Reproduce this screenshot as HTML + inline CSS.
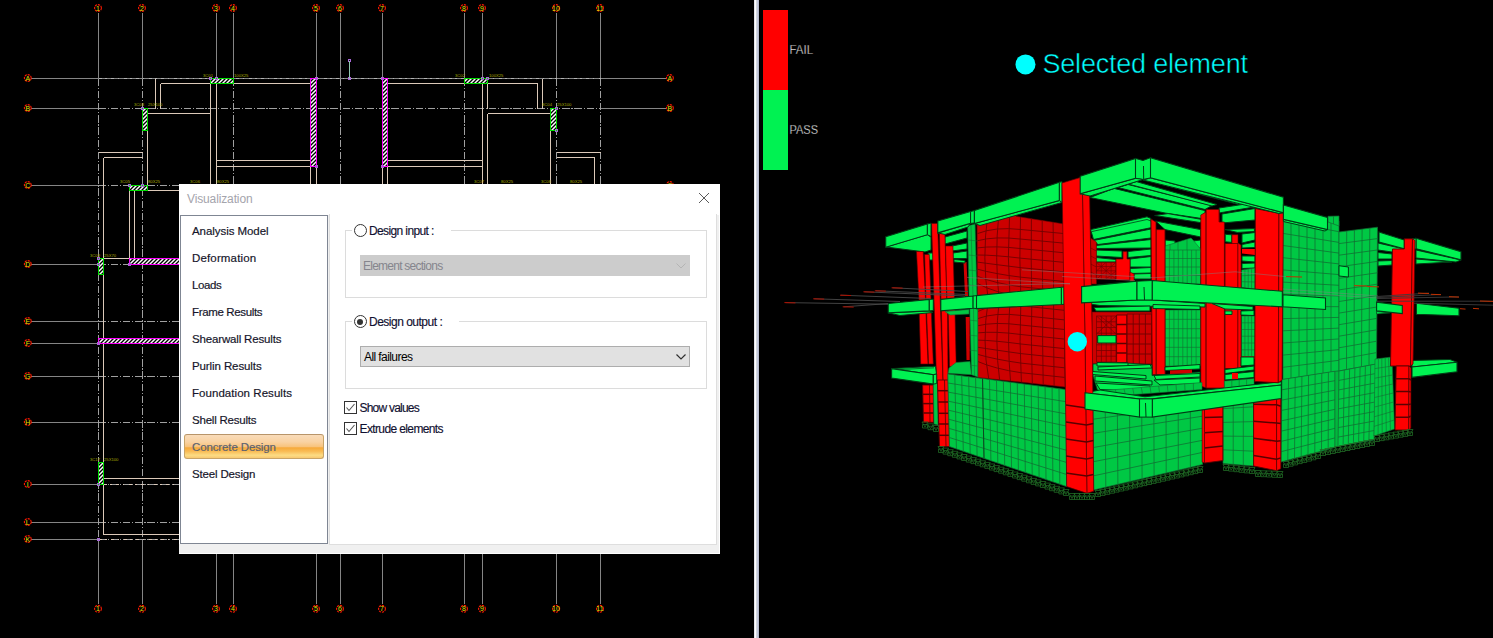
<!DOCTYPE html>
<html><head><meta charset="utf-8"><title>Visualization</title>
<style>
html,body{margin:0;padding:0;background:#000}
body{width:1493px;height:638px;position:relative;overflow:hidden;font-family:"Liberation Sans",sans-serif}
#div{position:absolute;left:754px;top:0;width:5px;height:638px;background:linear-gradient(90deg,#e4e4ec 0,#e4e4ec 1px,#ffffff 1px,#ffffff 2px,#d4d8e2 2px,#d4d8e2 3px,#c6cadc 3px,#c6cadc 4px,#b4b8cc 4px)}

#dlg{position:absolute;left:179px;top:184px;width:540.5px;height:370px;background:#f0f0f0;box-shadow:inset 0 -1px 0 #fff, inset -1px 0 0 #fff;}
#dlg:before{content:"";position:absolute;left:0;top:0;width:100%;height:31px;background:#fff}
#dlg .ttl{position:absolute;left:8px;top:8px;font-size:12px;color:#a4a4ac;letter-spacing:-0.13px;line-height:14px}
#dlg .cx{position:absolute;left:519px;top:8px}
#dlg .lb{position:absolute;left:1px;top:31px;width:148px;height:328.5px;box-sizing:border-box;border:1px solid #7f8693;background:#fff}
#dlg:after{content:"";position:absolute;left:0;top:31px;width:1px;height:328.5px;background:#fff}
#dlg .it{position:absolute;left:3px;width:140px;height:24.5px;box-sizing:border-box;font-size:11.5px;color:#15152a;line-height:24px;padding-left:8px;letter-spacing:-0.08px;-webkit-text-stroke:0.18px #15152a;white-space:nowrap}
#dlg .it span{position:relative;top:0.5px}
#dlg .it.sel{color:#5c6270;-webkit-text-stroke:0.2px #5c6270;border:1px solid #c8a468;border-top-color:#b8956a;border-radius:3px;padding-left:7px;line-height:22px;
 background:linear-gradient(#f9dcba 0%,#f9d2a2 30%,#f8c47e 50%,#f6a93a 56%,#f9bd58 72%,#fcdc84 88%,#f8c870 100%)}
#dlg .rp{position:absolute;left:150px;top:30px;width:388px;height:330.5px;box-sizing:border-box;border:1px solid #dedede;border-top:none;background:#fff}
#dlg .gb{position:absolute;left:14.5px;width:362.5px;box-sizing:border-box;border:1px solid #dcdcdc}
#dlg .gl{position:absolute;left:22px;height:14px;background:#fff;white-space:nowrap}
#dlg .rd{position:absolute;left:1.5px;top:1px;width:11px;height:11px;border:1px solid #333;border-radius:50%;background:#fff}
#dlg .rd.on:after{content:"";position:absolute;left:2.5px;top:2.5px;width:6px;height:6px;border-radius:50%;background:#333}
#dlg .lt{position:absolute;left:17px;top:1px;font-size:12px;line-height:14px;color:#101030;-webkit-text-stroke:0.15px #101030}
#dlg .cb{position:absolute;left:30px;width:330px;height:21px;box-sizing:border-box;border:1px solid #adadad;background:#e1e1e1;font-size:12px;line-height:21px;padding-left:3px;white-space:nowrap}
#dlg .cb.dis{border-color:#cccccc;background:#cccccc;color:#85858d}
#dlg .cb svg{position:absolute;right:3px;top:7px}
#dlg .ck{position:absolute;left:14px;height:13px;font-size:12px;line-height:13px;color:#101030;white-space:nowrap}
#dlg .ck svg{position:absolute;left:0;top:0}
#dlg .ck span{position:absolute;left:15.5px;top:1px;-webkit-text-stroke:0.15px #101030}

</style></head><body>
<svg width="754" height="638" viewBox="0 0 754 638" style="position:absolute;left:0;top:0" shape-rendering="crispEdges">
<g stroke="#858585" stroke-width="1" fill="none">
<path d="M98.5 13V78.5M98.5 539.5V604"/>
<path d="M142.5 13V78.5M142.5 539.5V604"/>
<path d="M216.5 13V78.5M216.5 539.5V604"/>
<path d="M233.5 13V78.5M233.5 539.5V604"/>
<path d="M316.5 13V78.5M316.5 539.5V604"/>
<path d="M340.5 13V78.5M340.5 539.5V604"/>
<path d="M382.5 13V78.5M382.5 539.5V604"/>
<path d="M464.5 13V78.5M464.5 539.5V604"/>
<path d="M482.5 13V78.5M482.5 539.5V604"/>
<path d="M556.5 13V78.5M556.5 539.5V604"/>
<path d="M600.5 13V78.5M600.5 539.5V604"/>
<path d="M31 78.5H98.5M600.5 78.5H666"/>
<path d="M31 108.5H98.5M600.5 108.5H666"/>
<path d="M31 185.5H98.5M600.5 185.5H666"/>
<path d="M31 264.5H98.5M600.5 264.5H666"/>
<path d="M31 321.5H98.5M600.5 321.5H666"/>
<path d="M31 343.5H98.5M600.5 343.5H666"/>
<path d="M31 376.5H98.5M600.5 376.5H666"/>
<path d="M31 422.5H98.5M600.5 422.5H666"/>
<path d="M31 484.5H98.5M600.5 484.5H666"/>
<path d="M31 522.5H98.5M600.5 522.5H666"/>
<path d="M31 539.5H98.5M600.5 539.5H666"/>
<path d="M98.5 78.5H600.5"/>
</g>
<g stroke="#a0a0a0" stroke-width="1" fill="none" stroke-dasharray="7.5 1.7 1.3 1.7">
<path d="M98.5 78.5V539.5"/>
<path d="M142.5 78.5V539.5"/>
<path d="M216.5 78.5V539.5"/>
<path d="M233.5 78.5V539.5"/>
<path d="M316.5 78.5V539.5"/>
<path d="M340.5 78.5V539.5"/>
<path d="M382.5 78.5V539.5"/>
<path d="M464.5 78.5V539.5"/>
<path d="M482.5 78.5V539.5"/>
<path d="M556.5 78.5V539.5"/>
<path d="M600.5 78.5V539.5"/>
<path d="M98.5 108.5H600.5"/>
<path d="M98.5 185.5H600.5"/>
<path d="M98.5 264.5H600.5"/>
<path d="M98.5 321.5H600.5"/>
<path d="M98.5 343.5H600.5"/>
<path d="M98.5 376.5H600.5"/>
<path d="M98.5 422.5H600.5"/>
<path d="M98.5 484.5H600.5"/>
<path d="M98.5 522.5H600.5"/>
<path d="M98.5 539.5H600.5"/>
</g>
<path d="M98.5 78.5H600.5" stroke="#b4b4b4" stroke-width="1" fill="none" stroke-dasharray="3 3.5 1.5 4.5"/>
<g stroke="#dcc9b9" stroke-width="1" fill="none">
<path d="M155.5 78.5V108.5"/>
<path d="M160.5 83.5V108.5"/>
<path d="M160.5 83.5H310"/>
<path d="M388 83.5H537.5"/>
<path d="M537.5 83.5V108.5"/>
<path d="M542.5 78.5V108.5"/>
<path d="M210.5 83.5V185"/>
<path d="M487.5 83.5V108.5"/>
<path d="M147.5 113.5H210.5"/>
<path d="M487.5 113.5H550.5"/>
<path d="M487.5 113.5V185"/>
<path d="M482.5 78.5V185"/>
<path d="M147.5 130V185.5"/>
<path d="M550.5 130V185"/>
<path d="M98.5 152.5H142.5"/>
<path d="M103.5 157.5H142.5"/>
<path d="M103.5 157.5V534.5"/>
<path d="M216.5 83.5V185"/>
<path d="M556.5 152.5H600.5"/>
<path d="M556.5 157.5H594.5"/>
<path d="M594.5 157.5V185"/>
<path d="M216.5 160.5H310.5"/>
<path d="M216.5 166.5H310.5"/>
<path d="M388 160.5H482.5"/>
<path d="M388 166.5H482.5"/>
<path d="M310.5 166.5V185"/>
<path d="M316.5 166.5V185"/>
<path d="M382.5 166.5V185"/>
<path d="M387.5 166.5V185"/>
<path d="M147.5 190.5H180"/>
<path d="M129.5 190.5V258.5"/>
<path d="M134.5 190.5V258.5"/>
<path d="M103.5 258.5H129.5"/>
<path d="M103.5 478.5H180"/>
<path d="M103.5 534.5H180"/>
</g>
<path d="M103.5 484.5H180M98.5 539.5H180" stroke="#dcc9b9" stroke-width="1" fill="none" stroke-dasharray="3 3.5 1.5 4.5"/>
<defs><pattern id="hz" width="4" height="4" patternUnits="userSpaceOnUse"><rect width="4" height="4" fill="#fff"/><path d="M-1 5L5 -1M-1 1L1 -1M3 5L5 3" stroke="#000" stroke-width="1.35" shape-rendering="geometricPrecision"/></pattern></defs>
<rect x="210.0" y="78.5" width="23.5" height="5.0" fill="url(#hz)" stroke="none" shape-rendering="geometricPrecision"/><rect x="210.0" y="78.5" width="23.5" height="5.0" fill="none" stroke="#00e000" stroke-width="1"/>
<rect x="464.5" y="78.5" width="23.0" height="5.0" fill="url(#hz)" stroke="none" shape-rendering="geometricPrecision"/><rect x="464.5" y="78.5" width="23.0" height="5.0" fill="none" stroke="#00e000" stroke-width="1"/>
<rect x="142.5" y="108.5" width="5.0" height="22.0" fill="url(#hz)" stroke="none" shape-rendering="geometricPrecision"/><rect x="142.5" y="108.5" width="5.0" height="22.0" fill="none" stroke="#00e000" stroke-width="1"/>
<rect x="550.5" y="108.5" width="6.0" height="22.0" fill="url(#hz)" stroke="none" shape-rendering="geometricPrecision"/><rect x="550.5" y="108.5" width="6.0" height="22.0" fill="none" stroke="#00e000" stroke-width="1"/>
<rect x="129.5" y="185.5" width="18.0" height="5.0" fill="url(#hz)" stroke="none" shape-rendering="geometricPrecision"/><rect x="129.5" y="185.5" width="18.0" height="5.0" fill="none" stroke="#00e000" stroke-width="1"/>
<rect x="98.5" y="258.5" width="5.0" height="16.0" fill="url(#hz)" stroke="none" shape-rendering="geometricPrecision"/><rect x="98.5" y="258.5" width="5.0" height="16.0" fill="none" stroke="#00e000" stroke-width="1"/>
<rect x="98.5" y="462.5" width="5.0" height="22.0" fill="url(#hz)" stroke="none" shape-rendering="geometricPrecision"/><rect x="98.5" y="462.5" width="5.0" height="22.0" fill="none" stroke="#00e000" stroke-width="1"/>
<rect x="310.5" y="78.5" width="6.0" height="88.0" fill="url(#hz)" stroke="none" shape-rendering="geometricPrecision"/><rect x="310.5" y="78.5" width="6.0" height="88.0" fill="none" stroke="#ff00ff" stroke-width="1"/>
<rect x="382.5" y="78.5" width="5.0" height="88.0" fill="url(#hz)" stroke="none" shape-rendering="geometricPrecision"/><rect x="382.5" y="78.5" width="5.0" height="88.0" fill="none" stroke="#ff00ff" stroke-width="1"/>
<rect x="129.5" y="258.5" width="52.5" height="6.0" fill="url(#hz)" stroke="none" shape-rendering="geometricPrecision"/><rect x="129.5" y="258.5" width="52.5" height="6.0" fill="none" stroke="#ff00ff" stroke-width="1"/>
<rect x="98.5" y="338.5" width="83.5" height="5.0" fill="url(#hz)" stroke="none" shape-rendering="geometricPrecision"/><rect x="98.5" y="338.5" width="83.5" height="5.0" fill="none" stroke="#ff00ff" stroke-width="1"/>
<rect x="209.5" y="77.5" width="2" height="2" fill="none" stroke="#a868d8" stroke-width="1"/>
<rect x="215.5" y="77.5" width="2" height="2" fill="none" stroke="#a868d8" stroke-width="1"/>
<rect x="315.5" y="77.5" width="2" height="2" fill="none" stroke="#a868d8" stroke-width="1"/>
<rect x="348.5" y="77.5" width="2" height="2" fill="none" stroke="#a868d8" stroke-width="1"/>
<rect x="348.5" y="59.5" width="2" height="2" fill="none" stroke="#a868d8" stroke-width="1"/>
<rect x="381.5" y="77.5" width="2" height="2" fill="none" stroke="#a868d8" stroke-width="1"/>
<rect x="481.5" y="77.5" width="2" height="2" fill="none" stroke="#a868d8" stroke-width="1"/>
<rect x="486.5" y="77.5" width="2" height="2" fill="none" stroke="#a868d8" stroke-width="1"/>
<rect x="141.5" y="107.5" width="2" height="2" fill="none" stroke="#a868d8" stroke-width="1"/>
<rect x="555.5" y="107.5" width="2" height="2" fill="none" stroke="#a868d8" stroke-width="1"/>
<rect x="555.5" y="129.5" width="2" height="2" fill="none" stroke="#a868d8" stroke-width="1"/>
<rect x="128.5" y="184.5" width="2" height="2" fill="none" stroke="#a868d8" stroke-width="1"/>
<rect x="141.5" y="184.5" width="2" height="2" fill="none" stroke="#a868d8" stroke-width="1"/>
<rect x="97.5" y="257.5" width="2" height="2" fill="none" stroke="#a868d8" stroke-width="1"/>
<rect x="97.5" y="263.5" width="2" height="2" fill="none" stroke="#a868d8" stroke-width="1"/>
<rect x="128.5" y="263.5" width="2" height="2" fill="none" stroke="#a868d8" stroke-width="1"/>
<rect x="97.5" y="342.5" width="2" height="2" fill="none" stroke="#a868d8" stroke-width="1"/>
<rect x="97.5" y="483.5" width="2" height="2" fill="none" stroke="#a868d8" stroke-width="1"/>
<rect x="97.5" y="538.5" width="2" height="2" fill="none" stroke="#a868d8" stroke-width="1"/>
<rect x="315.5" y="165.5" width="2" height="2" fill="none" stroke="#a868d8" stroke-width="1"/>
<rect x="381.5" y="165.5" width="2" height="2" fill="none" stroke="#a868d8" stroke-width="1"/>
<path d="M349.5 61V78" stroke="#90c8b0" stroke-width="1"/>
<g fill="#a8a800" font-family="Liberation Sans, sans-serif" font-size="4.2px" shape-rendering="auto">
<text x="203" y="77">3C01</text>
<text x="234" y="77">100X25</text>
<text x="455" y="77">3C02</text>
<text x="489" y="77">100X25</text>
<text x="134" y="106">3C03</text>
<text x="148" y="106">25X100</text>
<text x="542" y="106">3C04</text>
<text x="557" y="106">25X100</text>
<text x="120" y="183">3C05</text>
<text x="148" y="183">80X25</text>
<text x="190" y="183">3C06</text>
<text x="217" y="183">80X25</text>
<text x="474" y="183">3C07</text>
<text x="501" y="183">80X25</text>
<text x="541" y="183">3C08</text>
<text x="570" y="183">80X25</text>
<text x="90" y="257">3C09</text>
<text x="104" y="257">25X70</text>
<text x="90" y="461">3C17</text>
<text x="104" y="461">25X100</text>
</g>
<g shape-rendering="auto" font-family="Liberation Sans, sans-serif" font-size="7px" text-anchor="middle">
<circle cx="98.0" cy="8" r="3.4" fill="none" stroke="#ff1a00" stroke-width="1.1" stroke-dasharray="2.2 0.9"/><text x="98.0" y="10.5" fill="#e0e000">1</text>
<circle cx="98.0" cy="608.8" r="3.4" fill="none" stroke="#ff1a00" stroke-width="1.1" stroke-dasharray="2.2 0.9"/><text x="98.0" y="611.3" fill="#e0e000">1</text>
<circle cx="142.0" cy="8" r="3.4" fill="none" stroke="#ff1a00" stroke-width="1.1" stroke-dasharray="2.2 0.9"/><text x="142.0" y="10.5" fill="#e0e000">2</text>
<circle cx="142.0" cy="608.8" r="3.4" fill="none" stroke="#ff1a00" stroke-width="1.1" stroke-dasharray="2.2 0.9"/><text x="142.0" y="611.3" fill="#e0e000">2</text>
<circle cx="216.0" cy="8" r="3.4" fill="none" stroke="#ff1a00" stroke-width="1.1" stroke-dasharray="2.2 0.9"/><text x="216.0" y="10.5" fill="#e0e000">3</text>
<circle cx="216.0" cy="608.8" r="3.4" fill="none" stroke="#ff1a00" stroke-width="1.1" stroke-dasharray="2.2 0.9"/><text x="216.0" y="611.3" fill="#e0e000">3</text>
<circle cx="233.0" cy="8" r="3.4" fill="none" stroke="#ff1a00" stroke-width="1.1" stroke-dasharray="2.2 0.9"/><text x="233.0" y="10.5" fill="#e0e000">4</text>
<circle cx="233.0" cy="608.8" r="3.4" fill="none" stroke="#ff1a00" stroke-width="1.1" stroke-dasharray="2.2 0.9"/><text x="233.0" y="611.3" fill="#e0e000">4</text>
<circle cx="316.0" cy="8" r="3.4" fill="none" stroke="#ff1a00" stroke-width="1.1" stroke-dasharray="2.2 0.9"/><text x="316.0" y="10.5" fill="#e0e000">5</text>
<circle cx="316.0" cy="608.8" r="3.4" fill="none" stroke="#ff1a00" stroke-width="1.1" stroke-dasharray="2.2 0.9"/><text x="316.0" y="611.3" fill="#e0e000">5</text>
<circle cx="340.0" cy="8" r="3.4" fill="none" stroke="#ff1a00" stroke-width="1.1" stroke-dasharray="2.2 0.9"/><text x="340.0" y="10.5" fill="#e0e000">6</text>
<circle cx="340.0" cy="608.8" r="3.4" fill="none" stroke="#ff1a00" stroke-width="1.1" stroke-dasharray="2.2 0.9"/><text x="340.0" y="611.3" fill="#e0e000">6</text>
<circle cx="382.0" cy="8" r="3.4" fill="none" stroke="#ff1a00" stroke-width="1.1" stroke-dasharray="2.2 0.9"/><text x="382.0" y="10.5" fill="#e0e000">7</text>
<circle cx="382.0" cy="608.8" r="3.4" fill="none" stroke="#ff1a00" stroke-width="1.1" stroke-dasharray="2.2 0.9"/><text x="382.0" y="611.3" fill="#e0e000">7</text>
<circle cx="464.0" cy="8" r="3.4" fill="none" stroke="#ff1a00" stroke-width="1.1" stroke-dasharray="2.2 0.9"/><text x="464.0" y="10.5" fill="#e0e000">8</text>
<circle cx="464.0" cy="608.8" r="3.4" fill="none" stroke="#ff1a00" stroke-width="1.1" stroke-dasharray="2.2 0.9"/><text x="464.0" y="611.3" fill="#e0e000">8</text>
<circle cx="482.0" cy="8" r="3.4" fill="none" stroke="#ff1a00" stroke-width="1.1" stroke-dasharray="2.2 0.9"/><text x="482.0" y="10.5" fill="#e0e000">9</text>
<circle cx="482.0" cy="608.8" r="3.4" fill="none" stroke="#ff1a00" stroke-width="1.1" stroke-dasharray="2.2 0.9"/><text x="482.0" y="611.3" fill="#e0e000">9</text>
<circle cx="556.0" cy="8" r="3.4" fill="none" stroke="#ff1a00" stroke-width="1.1" stroke-dasharray="2.2 0.9"/><text x="556.0" y="10.5" fill="#e0e000">10</text>
<circle cx="556.0" cy="608.8" r="3.4" fill="none" stroke="#ff1a00" stroke-width="1.1" stroke-dasharray="2.2 0.9"/><text x="556.0" y="611.3" fill="#e0e000">10</text>
<circle cx="600.0" cy="8" r="3.4" fill="none" stroke="#ff1a00" stroke-width="1.1" stroke-dasharray="2.2 0.9"/><text x="600.0" y="10.5" fill="#e0e000">11</text>
<circle cx="600.0" cy="608.8" r="3.4" fill="none" stroke="#ff1a00" stroke-width="1.1" stroke-dasharray="2.2 0.9"/><text x="600.0" y="611.3" fill="#e0e000">11</text>
<circle cx="27.8" cy="78.0" r="3.4" fill="none" stroke="#ff1a00" stroke-width="1.1" stroke-dasharray="2.2 0.9"/><text x="27.8" y="80.5" fill="#e0e000">A</text>
<circle cx="669.9" cy="78.0" r="3.4" fill="none" stroke="#ff1a00" stroke-width="1.1" stroke-dasharray="2.2 0.9"/><text x="669.9" y="80.5" fill="#e0e000">A</text>
<circle cx="27.8" cy="108.0" r="3.4" fill="none" stroke="#ff1a00" stroke-width="1.1" stroke-dasharray="2.2 0.9"/><text x="27.8" y="110.5" fill="#e0e000">B</text>
<circle cx="669.9" cy="108.0" r="3.4" fill="none" stroke="#ff1a00" stroke-width="1.1" stroke-dasharray="2.2 0.9"/><text x="669.9" y="110.5" fill="#e0e000">B</text>
<circle cx="27.8" cy="185.0" r="3.4" fill="none" stroke="#ff1a00" stroke-width="1.1" stroke-dasharray="2.2 0.9"/><text x="27.8" y="187.5" fill="#e0e000">C</text>
<circle cx="669.9" cy="185.0" r="3.4" fill="none" stroke="#ff1a00" stroke-width="1.1" stroke-dasharray="2.2 0.9"/><text x="669.9" y="187.5" fill="#e0e000">C</text>
<circle cx="27.8" cy="264.0" r="3.4" fill="none" stroke="#ff1a00" stroke-width="1.1" stroke-dasharray="2.2 0.9"/><text x="27.8" y="266.5" fill="#e0e000">D</text>
<circle cx="669.9" cy="264.0" r="3.4" fill="none" stroke="#ff1a00" stroke-width="1.1" stroke-dasharray="2.2 0.9"/><text x="669.9" y="266.5" fill="#e0e000">D</text>
<circle cx="27.8" cy="321.0" r="3.4" fill="none" stroke="#ff1a00" stroke-width="1.1" stroke-dasharray="2.2 0.9"/><text x="27.8" y="323.5" fill="#e0e000">E</text>
<circle cx="669.9" cy="321.0" r="3.4" fill="none" stroke="#ff1a00" stroke-width="1.1" stroke-dasharray="2.2 0.9"/><text x="669.9" y="323.5" fill="#e0e000">E</text>
<circle cx="27.8" cy="343.0" r="3.4" fill="none" stroke="#ff1a00" stroke-width="1.1" stroke-dasharray="2.2 0.9"/><text x="27.8" y="345.5" fill="#e0e000">F</text>
<circle cx="669.9" cy="343.0" r="3.4" fill="none" stroke="#ff1a00" stroke-width="1.1" stroke-dasharray="2.2 0.9"/><text x="669.9" y="345.5" fill="#e0e000">F</text>
<circle cx="27.8" cy="376.0" r="3.4" fill="none" stroke="#ff1a00" stroke-width="1.1" stroke-dasharray="2.2 0.9"/><text x="27.8" y="378.5" fill="#e0e000">G</text>
<circle cx="669.9" cy="376.0" r="3.4" fill="none" stroke="#ff1a00" stroke-width="1.1" stroke-dasharray="2.2 0.9"/><text x="669.9" y="378.5" fill="#e0e000">G</text>
<circle cx="27.8" cy="422.0" r="3.4" fill="none" stroke="#ff1a00" stroke-width="1.1" stroke-dasharray="2.2 0.9"/><text x="27.8" y="424.5" fill="#e0e000">H</text>
<circle cx="669.9" cy="422.0" r="3.4" fill="none" stroke="#ff1a00" stroke-width="1.1" stroke-dasharray="2.2 0.9"/><text x="669.9" y="424.5" fill="#e0e000">H</text>
<circle cx="27.8" cy="484.0" r="3.4" fill="none" stroke="#ff1a00" stroke-width="1.1" stroke-dasharray="2.2 0.9"/><text x="27.8" y="486.5" fill="#e0e000">I</text>
<circle cx="669.9" cy="484.0" r="3.4" fill="none" stroke="#ff1a00" stroke-width="1.1" stroke-dasharray="2.2 0.9"/><text x="669.9" y="486.5" fill="#e0e000">I</text>
<circle cx="27.8" cy="522.0" r="3.4" fill="none" stroke="#ff1a00" stroke-width="1.1" stroke-dasharray="2.2 0.9"/><text x="27.8" y="524.5" fill="#e0e000">L</text>
<circle cx="669.9" cy="522.0" r="3.4" fill="none" stroke="#ff1a00" stroke-width="1.1" stroke-dasharray="2.2 0.9"/><text x="669.9" y="524.5" fill="#e0e000">L</text>
<circle cx="27.8" cy="539.0" r="3.4" fill="none" stroke="#ff1a00" stroke-width="1.1" stroke-dasharray="2.2 0.9"/><text x="27.8" y="541.5" fill="#e0e000">K</text>
<circle cx="669.9" cy="539.0" r="3.4" fill="none" stroke="#ff1a00" stroke-width="1.1" stroke-dasharray="2.2 0.9"/><text x="669.9" y="541.5" fill="#e0e000">K</text>
</g>
</svg>
<div id="div"></div>
<svg width="734" height="638" viewBox="759 0 734 638" style="position:absolute;left:759px;top:0">
<rect x="763" y="10" width="25" height="80" fill="#ff0000" shape-rendering="crispEdges"/><rect x="763" y="90" width="25" height="80" fill="#00f252" shape-rendering="crispEdges"/>
<g font-family="Liberation Sans, sans-serif" font-size="12px" fill="#f0f0f0" stroke="#000" stroke-width="0.3"><text x="789.5" y="54" textLength="23.5" lengthAdjust="spacingAndGlyphs">FAIL</text><text x="789.5" y="134" textLength="28.5" lengthAdjust="spacingAndGlyphs">PASS</text></g>
<circle cx="1025.5" cy="64.4" r="10" fill="#00ffff"/>
<text x="1042.5" y="73" font-family="Liberation Sans, sans-serif" font-size="27px" fill="#00ffff" stroke="#000" stroke-width="0.5" textLength="205.5" lengthAdjust="spacing">Selected element</text>
<polygon points="1378.0,243.0 1404.0,249.0 1404.0,253.0 1392.0,252.0 1378.0,250.0" fill="#00f252" stroke="#003c16" stroke-width="1.0"/>
<polygon points="1378.0,252.5 1392.0,254.0 1392.0,259.0 1378.0,259.0" fill="#00f252" stroke="#003c16" stroke-width="1.0"/>
<polygon points="1378.0,261.0 1392.0,260.5 1392.0,265.0 1378.0,266.0" fill="#00f252" stroke="#003c16" stroke-width="1.0"/>
<polygon points="1416.0,250.0 1461.0,260.0 1456.0,262.0 1416.0,258.0" fill="#00f252" stroke="#003c16" stroke-width="1.0"/>
<polygon points="1416.0,259.0 1452.0,262.0 1416.0,264.0" fill="#00f252" stroke="#003c16" stroke-width="1.0"/>
<polygon points="1379.0,232.0 1404.3,240.1 1404.3,248.9 1379.0,242.1" fill="#00f252" stroke="#003c16" stroke-width="1.1"/>
<polygon points="1416.0,238.3 1461.0,251.7 1461.0,259.7 1416.0,248.7" fill="#00f252" stroke="#003c16" stroke-width="1.1"/>
<polygon points="1412.4,238.8 1416.0,238.3 1416.0,249.0 1412.4,249.0" fill="#00f252" stroke="#003c16" stroke-width="1.0"/>
<polygon points="1416.4,303.2 1459.0,308.3 1459.0,315.7 1416.4,314.2" fill="#00f252" stroke="#003c16" stroke-width="1.1"/>
<polygon points="1412.0,367.0 1412.0,360.5 1450.0,359.5 1457.0,362.3" fill="#00f252" stroke="#003c16" stroke-width="1.0"/>
<polygon points="1412.0,367.0 1457.0,362.3 1457.0,371.7 1412.0,377.4" fill="#00f252" stroke="#003c16" stroke-width="1.1"/>
<polygon points="1283.0,209.0 1339.0,221.0 1339.0,371.0 1283.0,379.5" fill="#00c844" stroke="#126c33" stroke-width="0.75"/>
<path d="M1291.0 210.7L1291.0 378.3M1299.0 212.4L1299.0 377.1M1307.0 214.1L1307.0 375.9M1315.0 215.9L1315.0 374.6M1323.0 217.6L1323.0 373.4M1331.0 219.3L1331.0 372.2M1283.0 221.2L1339.0 231.7M1283.0 233.4L1339.0 242.4M1283.0 245.5L1339.0 253.1M1283.0 257.7L1339.0 263.9M1283.0 269.9L1339.0 274.6M1283.0 282.1L1339.0 285.3M1283.0 294.2L1339.0 296.0M1283.0 306.4L1339.0 306.7M1283.0 318.6L1339.0 317.4M1283.0 330.8L1339.0 328.1M1283.0 343.0L1339.0 338.9M1283.0 355.1L1339.0 349.6M1283.0 367.3L1339.0 360.3" stroke="#126c33" stroke-width="0.75" fill="none"/>
<polygon points="1328.0,222.0 1328.0,216.3 1339.0,216.0 1339.0,226.0" fill="#00c844" stroke="#126c33" stroke-width="0.7"/>
<path d="M1333.5 216.2L1333.5 224.0" stroke="#126c33" stroke-width="0.7" fill="none"/>
<polygon points="1282.0,379.5 1335.0,371.2 1335.0,447.4 1281.0,462.0" fill="#00c844" stroke="#126c33" stroke-width="0.75"/>
<path d="M1288.6 378.5L1287.8 460.2M1295.2 377.4L1294.5 458.4M1301.9 376.4L1301.2 456.5M1308.5 375.4L1308.0 454.7M1315.1 374.3L1314.8 452.9M1321.8 373.3L1321.5 451.0M1328.4 372.2L1328.2 449.2M1281.9 389.8L1335.0 380.7M1281.8 400.1L1335.0 390.2M1281.6 410.4L1335.0 399.8M1281.5 420.8L1335.0 409.3M1281.4 431.1L1335.0 418.8M1281.2 441.4L1335.0 428.3M1281.1 451.7L1335.0 437.9" stroke="#126c33" stroke-width="0.75" fill="none"/>
<polygon points="1335.0,371.2 1339.0,371.0 1339.0,446.0 1335.0,447.4" fill="#00b83c" stroke="#126c33" stroke-width="0.6"/>
<polygon points="1339.0,232.0 1377.5,227.2 1376.5,364.0 1339.0,371.0" fill="#00c844" stroke="#126c33" stroke-width="0.75"/>
<path d="M1346.7 231.0L1346.5 369.6M1354.4 230.1L1354.0 368.2M1362.1 229.1L1361.5 366.8M1369.8 228.2L1369.0 365.4M1339.0 243.6L1377.4 238.6M1339.0 255.2L1377.3 250.0M1339.0 266.8L1377.2 261.4M1339.0 278.3L1377.2 272.8M1339.0 289.9L1377.1 284.2M1339.0 301.5L1377.0 295.6M1339.0 313.1L1376.9 307.0M1339.0 324.7L1376.8 318.4M1339.0 336.2L1376.8 329.8M1339.0 347.8L1376.7 341.2M1339.0 359.4L1376.6 352.6" stroke="#126c33" stroke-width="0.75" fill="none"/>
<polygon points="1339.0,371.0 1376.0,364.0 1374.0,440.0 1338.0,446.5" fill="#00c844" stroke="#126c33" stroke-width="0.75"/>
<path d="M1344.3 370.0L1343.1 445.6M1349.6 369.0L1348.3 444.6M1354.9 368.0L1353.4 443.7M1360.1 367.0L1358.6 442.8M1365.4 366.0L1363.7 441.9M1370.7 365.0L1368.9 440.9M1338.9 380.4L1375.8 373.5M1338.8 389.9L1375.5 383.0M1338.6 399.3L1375.2 392.5M1338.5 408.8L1375.0 402.0M1338.4 418.2L1374.8 411.5M1338.2 427.6L1374.5 421.0M1338.1 437.1L1374.2 430.5" stroke="#126c33" stroke-width="0.75" fill="none"/>
<polygon points="1375.0,359.0 1392.0,357.0 1394.5,429.0 1374.0,436.0" fill="#00c844" stroke="#126c33" stroke-width="0.6"/>
<path d="M1378.4 358.6L1378.1 434.6M1381.8 358.2L1382.2 433.2M1385.2 357.8L1386.3 431.8M1388.6 357.4L1390.4 430.4M1374.9 368.6L1392.3 366.0M1374.8 378.2L1392.6 375.0M1374.6 387.9L1392.9 384.0M1374.5 397.5L1393.2 393.0M1374.4 407.1L1393.6 402.0M1374.2 416.8L1393.9 411.0M1374.1 426.4L1394.2 420.0" stroke="#126c33" stroke-width="0.6" fill="none"/>
<polygon points="1339.0,265.7 1348.4,267.0 1348.4,277.0 1339.0,276.0" fill="#00f252" stroke="#003c16" stroke-width="1.0"/>
<polygon points="1392.5,249.0 1404.3,249.0 1404.3,238.8 1412.5,238.8 1410.5,366.0 1390.5,366.0" fill="#ff0000" stroke="#5a0000" stroke-width="0.9"/>
<polygon points="1412.5,238.8 1415.0,240.5 1413.0,364.0 1410.5,366.0" fill="#ff0000" stroke="#5a0000" stroke-width="0.8"/>
<polygon points="1396.2,366.0 1409.0,366.0 1408.8,430.0 1395.0,430.0" fill="#ff0000" stroke="#5a0000" stroke-width="0.9"/>
<polygon points="1409.0,366.0 1411.0,368.0 1410.8,428.0 1408.8,430.0" fill="#ff0000" stroke="#5a0000" stroke-width="0.7"/>
<path d="M1396.0 378.8L1409.0 378.8L1411.0 380.0" stroke="#5a0000" stroke-width="1.5" fill="none"/>
<path d="M1395.7 391.6L1408.9 391.6L1410.9 392.0" stroke="#5a0000" stroke-width="1.5" fill="none"/>
<path d="M1395.5 404.4L1408.9 404.4L1410.9 404.0" stroke="#5a0000" stroke-width="1.5" fill="none"/>
<path d="M1395.2 417.2L1408.8 417.2L1410.8 416.0" stroke="#5a0000" stroke-width="1.5" fill="none"/>
<polygon points="1376.6,302.1 1402.3,305.5 1402.3,313.6 1376.6,310.9" fill="#00f252" stroke="#003c16" stroke-width="1.1"/>
<polygon points="1376.6,311.5 1390.0,313.0 1376.6,314.0" fill="#00f252" stroke="#003c16" stroke-width="0.6"/>
<polygon points="1090.0,197.5 1114.0,188.4 1205.0,210.6 1205.0,219.0 1165.0,213.0" fill="#00f252" stroke="#003c16" stroke-width="1.0"/>
<polygon points="1118.0,187.5 1128.0,184.5 1212.0,205.5 1205.0,209.5" fill="#00f252" stroke="#003c16" stroke-width="1.0"/>
<polygon points="1128.0,184.0 1136.0,181.5 1217.0,204.5 1212.0,206.0" fill="#00f252" stroke="#003c16" stroke-width="1.0"/>
<polygon points="1143.0,179.5 1150.0,178.5 1256.0,205.0 1250.0,207.5" fill="#00f252" stroke="#003c16" stroke-width="1.0"/>
<polygon points="1219.0,208.0 1252.0,203.0 1254.0,207.0 1219.0,213.0" fill="#00f252" stroke="#003c16" stroke-width="1.0"/>
<polygon points="1222.0,214.0 1255.0,208.5 1255.0,220.0 1222.0,223.0" fill="#00f252" stroke="#003c16" stroke-width="1.0"/>
<polygon points="1090.6,229.6 1147.0,216.8 1151.0,218.5 1151.0,227.7 1093.5,239.5" fill="#00f252" stroke="#003c16" stroke-width="1.0"/>
<path d="M1092.0 231.5L1147.0 219.5L1151.0 221.0" stroke="#003c16" stroke-width="0.8" fill="none"/>
<polygon points="1093.5,240.5 1151.0,229.0 1151.0,238.0 1098.0,244.5" fill="#00f252" stroke="#003c16" stroke-width="1.0"/>
<polygon points="1096.0,245.5 1151.0,239.5 1151.0,248.0 1096.0,248.5" fill="#00f252" stroke="#003c16" stroke-width="1.0"/>
<polygon points="1096.0,250.0 1122.0,251.0 1122.0,257.5 1096.0,256.0" fill="#00f252" stroke="#003c16" stroke-width="1.0"/>
<polygon points="1128.0,251.5 1151.0,249.0 1151.0,255.5 1128.0,257.5" fill="#00f252" stroke="#003c16" stroke-width="1.0"/>
<polygon points="1096.0,257.5 1116.0,259.5 1116.0,262.0 1096.0,262.0" fill="#00f252" stroke="#003c16" stroke-width="1.0"/>
<polygon points="1130.0,259.0 1151.0,256.5 1151.0,267.0 1130.0,267.0" fill="#00f252" stroke="#003c16" stroke-width="1.0"/>
<polygon points="1130.0,268.5 1151.0,267.5 1151.0,273.0 1130.0,273.5" fill="#00f252" stroke="#003c16" stroke-width="1.0"/>
<polygon points="1134.0,274.0 1151.0,273.5 1151.0,279.0 1134.0,279.0" fill="#00f252" stroke="#003c16" stroke-width="1.0"/>
<polygon points="1154.6,215.5 1168.0,213.6 1205.0,220.0 1200.0,222.5" fill="#00f252" stroke="#003c16" stroke-width="1.0"/>
<polygon points="1155.6,221.0 1200.7,229.6 1200.7,237.0 1165.0,229.6" fill="#00f252" stroke="#003c16" stroke-width="1.0"/>
<polygon points="1165.0,240.0 1175.0,241.0 1175.0,245.6 1165.0,250.0" fill="#00f252" stroke="#003c16" stroke-width="1.0"/>
<polygon points="1193.0,241.0 1200.5,240.0 1200.5,248.4 1193.0,247.4" fill="#00f252" stroke="#003c16" stroke-width="1.0"/>
<polygon points="1090.5,238.0 1096.4,242.0 1096.4,284.0 1091.0,284.0" fill="#cc0000" stroke="#700000" stroke-width="0.6"/>
<path d="M1090.7 248.0L1096.4 251.0" stroke="#700000" stroke-width="0.6" fill="none"/>
<path d="M1090.7 256.0L1096.4 259.0" stroke="#700000" stroke-width="0.6" fill="none"/>
<path d="M1090.7 264.0L1096.4 267.0" stroke="#700000" stroke-width="0.6" fill="none"/>
<path d="M1090.7 272.0L1096.4 275.0" stroke="#700000" stroke-width="0.6" fill="none"/>
<polygon points="1096.4,262.3 1116.0,262.3 1116.0,279.2 1096.4,279.2" fill="#cc0000" stroke="#700000" stroke-width="0.6"/>
<path d="M1101.3 262.3L1101.3 279.2M1106.2 262.3L1106.2 279.2M1111.1 262.3L1111.1 279.2M1096.4 266.5L1116.0 266.5M1096.4 270.8L1116.0 270.8M1096.4 275.0L1116.0 275.0" stroke="#700000" stroke-width="0.6" fill="none"/>
<path d="M1096.4 262.3L1116.0 279.2" stroke="#700000" stroke-width="0.6" fill="none"/>
<path d="M1116.0 262.3L1096.4 279.2" stroke="#700000" stroke-width="0.6" fill="none"/>
<path d="M1106.0 262.3L1096.4 271.0" stroke="#700000" stroke-width="0.6" fill="none"/>
<path d="M1106.0 279.0L1116.0 271.0" stroke="#700000" stroke-width="0.6" fill="none"/>
<polygon points="1092.0,312.0 1152.0,312.0 1152.0,364.0 1092.0,364.0" fill="#cc0000" stroke="#700000" stroke-width="0.6"/>
<path d="" stroke="#700000" stroke-width="0.6" fill="none"/>
<polygon points="1096.5,316.0 1116.0,316.0 1116.0,362.0 1096.5,362.0" fill="#cc0000" stroke="#700000" stroke-width="0.7"/>
<path d="M1101.4 316.0L1101.4 362.0M1106.2 316.0L1106.2 362.0M1111.1 316.0L1111.1 362.0M1096.5 321.8L1116.0 321.8M1096.5 327.5L1116.0 327.5M1096.5 333.2L1116.0 333.2M1096.5 339.0L1116.0 339.0M1096.5 344.8L1116.0 344.8M1096.5 350.5L1116.0 350.5M1096.5 356.2L1116.0 356.2" stroke="#700000" stroke-width="0.7" fill="none"/>
<path d="M1096.5 316.0L1116.0 334.0" stroke="#700000" stroke-width="0.6" fill="none"/>
<path d="M1116.0 316.0L1096.5 334.0" stroke="#700000" stroke-width="0.6" fill="none"/>
<path d="M1100.0 316.0L1116.0 328.0" stroke="#700000" stroke-width="0.6" fill="none"/>
<polygon points="1127.0,314.0 1151.6,314.0 1151.6,364.0 1127.0,364.0" fill="#cc0000" stroke="#700000" stroke-width="0.9"/>
<path d="M1133.2 314.0L1133.2 364.0M1139.3 314.0L1139.3 364.0M1145.4 314.0L1145.4 364.0M1127.0 324.0L1151.6 324.0M1127.0 334.0L1151.6 334.0M1127.0 344.0L1151.6 344.0M1127.0 354.0L1151.6 354.0" stroke="#700000" stroke-width="0.9" fill="none"/>
<polygon points="1116.0,259.0 1123.0,259.0 1123.0,251.6 1127.0,251.6 1127.0,259.0 1130.0,259.0 1130.0,280.0 1116.0,280.0" fill="#ff0000" stroke="#5a0000" stroke-width="0.7"/>
<polygon points="1130.0,272.0 1134.0,274.0 1134.0,281.0 1130.0,281.0" fill="#ff0000" stroke="#5a0000" stroke-width="0.6"/>
<polygon points="1116.6,315.0 1126.7,315.0 1126.7,362.5 1116.6,362.5" fill="#ff0000" stroke="#5a0000" stroke-width="0.9"/>
<path d="M1116.6 324.5L1126.7 324.5" stroke="#5a0000" stroke-width="1.5" fill="none"/>
<path d="M1116.6 334.0L1126.7 334.0" stroke="#5a0000" stroke-width="1.5" fill="none"/>
<path d="M1116.6 343.5L1126.7 343.5" stroke="#5a0000" stroke-width="1.5" fill="none"/>
<path d="M1116.6 353.0L1126.7 353.0" stroke="#5a0000" stroke-width="1.5" fill="none"/>
<polygon points="1097.7,335.6 1116.0,335.6 1116.0,343.0 1097.7,343.0" fill="#00f252" stroke="#003c16" stroke-width="1.0"/>
<polygon points="1165.0,246.0 1191.0,238.0 1193.0,240.0 1200.5,249.0 1200.5,252.0 1165.0,252.0" fill="#00c844" stroke="#126c33" stroke-width="0.6"/>
<polygon points="1165.0,250.0 1200.5,250.0 1200.5,284.0 1165.0,284.0" fill="#00c844" stroke="#126c33" stroke-width="0.6"/>
<path d="M1169.4 250.0L1169.4 284.0M1173.9 250.0L1173.9 284.0M1178.3 250.0L1178.3 284.0M1182.8 250.0L1182.8 284.0M1187.2 250.0L1187.2 284.0M1191.6 250.0L1191.6 284.0M1196.1 250.0L1196.1 284.0M1165.0 258.5L1200.5 258.5M1165.0 267.0L1200.5 267.0M1165.0 275.5L1200.5 275.5" stroke="#126c33" stroke-width="0.6" fill="none"/>
<path d="M1170.0 244.5L1170.0 250.0" stroke="#126c33" stroke-width="0.6" fill="none"/>
<path d="M1178.0 242.0L1178.0 250.0" stroke="#126c33" stroke-width="0.6" fill="none"/>
<path d="M1187.0 239.5L1187.0 250.0" stroke="#126c33" stroke-width="0.6" fill="none"/>
<polygon points="1165.0,310.0 1200.5,310.0 1200.5,366.0 1165.0,366.0" fill="#00c844" stroke="#126c33" stroke-width="0.6"/>
<path d="M1169.4 310.0L1169.4 366.0M1173.9 310.0L1173.9 366.0M1178.3 310.0L1178.3 366.0M1182.8 310.0L1182.8 366.0M1187.2 310.0L1187.2 366.0M1191.6 310.0L1191.6 366.0M1196.1 310.0L1196.1 366.0M1165.0 319.3L1200.5 319.3M1165.0 328.7L1200.5 328.7M1165.0 338.0L1200.5 338.0M1165.0 347.3L1200.5 347.3M1165.0 356.7L1200.5 356.7" stroke="#126c33" stroke-width="0.6" fill="none"/>
<polygon points="1225.2,234.3 1231.8,234.8 1231.8,242.4 1225.2,241.8" fill="#00f252" stroke="#003c16" stroke-width="1.0"/>
<polygon points="1225.0,229.6 1254.4,228.6 1254.4,231.5 1237.4,232.4" fill="#00f252" stroke="#003c16" stroke-width="1.0"/>
<polygon points="1242.0,234.0 1255.0,232.5 1255.0,240.0 1242.0,243.0" fill="#00f252" stroke="#003c16" stroke-width="1.0"/>
<polygon points="1242.0,244.5 1255.0,242.0 1255.0,247.5 1242.0,248.0" fill="#00f252" stroke="#003c16" stroke-width="1.0"/>
<polygon points="1242.0,249.0 1255.0,249.0 1255.0,255.0 1242.0,253.5" fill="#ff0000"/>
<polygon points="1242.0,256.0 1255.0,256.0 1255.0,262.0 1242.0,261.0" fill="#00f252" stroke="#003c16" stroke-width="1.0"/>
<polygon points="1242.0,263.5 1255.0,263.0 1255.0,268.0 1242.0,268.5" fill="#00f252" stroke="#003c16" stroke-width="1.0"/>
<polygon points="1241.5,270.0 1255.0,268.0 1255.0,289.0 1241.5,287.5" fill="#00c844" stroke="#126c33" stroke-width="0.6"/>
<path d="M1244.9 269.5L1244.9 287.9M1248.2 269.0L1248.2 288.2M1251.6 268.5L1251.6 288.6M1241.5 275.8L1255.0 275.0M1241.5 281.7L1255.0 282.0" stroke="#126c33" stroke-width="0.6" fill="none"/>
<polygon points="1241.5,316.0 1255.0,316.0 1255.0,356.5 1241.5,356.5" fill="#00c844" stroke="#126c33" stroke-width="0.6"/>
<path d="M1244.9 316.0L1244.9 356.5M1248.2 316.0L1248.2 356.5M1251.6 316.0L1251.6 356.5M1241.5 322.8L1255.0 322.8M1241.5 329.5L1255.0 329.5M1241.5 336.2L1255.0 336.2M1241.5 343.0L1255.0 343.0M1241.5 349.8L1255.0 349.8" stroke="#126c33" stroke-width="0.6" fill="none"/>
<polygon points="1241.5,356.5 1255.0,356.5 1255.0,359.0 1241.5,359.0" fill="#ff0000"/>
<polygon points="1156.0,229.6 1165.0,229.6 1165.1,374.7 1156.0,374.7" fill="#ff0000" stroke="#5a0000" stroke-width="0.9"/>
<polygon points="1151.0,219.0 1156.0,222.0 1156.0,374.7 1152.3,374.7" fill="#ff0000" stroke="#5a0000" stroke-width="0.8"/>
<polygon points="1225.0,243.5 1238.0,243.5 1238.0,368.6 1225.0,368.6" fill="#ff0000" stroke="#5a0000" stroke-width="0.9"/>
<polygon points="1232.0,243.5 1232.0,234.7 1238.0,234.7 1238.0,243.5" fill="#ff0000" stroke="#5a0000" stroke-width="0.6"/>
<polygon points="1238.0,243.0 1241.0,245.0 1241.0,368.0 1238.0,368.6" fill="#ff0000" stroke="#5a0000" stroke-width="0.6"/>
<polygon points="1200.8,215.0 1206.2,212.0 1206.2,388.0 1200.8,386.0" fill="#ff0000" stroke="#5a0000" stroke-width="0.7"/>
<polygon points="1206.2,209.5 1219.0,209.5 1224.4,388.0 1206.2,388.0" fill="#ff0000" stroke="#5a0000" stroke-width="0.9"/>
<polygon points="1206.2,209.5 1219.0,209.5 1219.0,222.0 1224.4,222.0 1224.4,388.0 1206.2,388.0" fill="#ff0000" stroke="#5a0000" stroke-width="0.7"/>
<polygon points="1093.0,364.0 1127.0,363.0 1152.0,365.0 1152.0,375.5 1200.0,372.0 1200.0,384.0 1098.0,392.0 1093.0,376.0" fill="#00d648" stroke="#003c16" stroke-width="0.8"/>
<polygon points="1097.0,362.5 1128.0,363.0 1128.0,366.0 1097.0,366.0" fill="#00f252" stroke="#003c16" stroke-width="1.0"/>
<polygon points="1098.0,367.0 1150.0,364.5 1152.0,368.0 1098.0,370.0" fill="#00f252" stroke="#003c16" stroke-width="1.0"/>
<polygon points="1092.5,371.5 1146.0,375.5 1146.0,379.0 1092.5,374.5" fill="#00f252" stroke="#003c16" stroke-width="1.0"/>
<polygon points="1095.0,376.0 1152.0,381.0 1152.0,385.0 1095.0,381.0" fill="#00f252" stroke="#003c16" stroke-width="1.0"/>
<polygon points="1096.0,383.0 1150.0,386.0 1150.0,391.5 1100.0,389.5" fill="#00f252" stroke="#003c16" stroke-width="1.0"/>
<polygon points="1165.0,367.0 1200.0,364.5 1200.0,369.0 1165.0,370.5" fill="#00f252" stroke="#003c16" stroke-width="1.0"/>
<polygon points="1154.0,375.5 1200.0,373.5 1200.0,377.0 1156.0,379.5" fill="#00f252" stroke="#003c16" stroke-width="1.0"/>
<polygon points="1154.0,380.0 1200.0,378.0 1200.0,383.5 1160.0,385.0" fill="#00f252" stroke="#003c16" stroke-width="1.0"/>
<polygon points="1170.0,370.5 1192.0,369.5 1192.0,373.0 1170.0,374.0" fill="#cc0000"/>
<polygon points="1098.0,391.0 1202.0,382.5 1202.0,389.5 1100.0,397.0" fill="#00c844" stroke="#126c33" stroke-width="0.6"/>
<path d="M1106.7 390.3L1108.5 396.4M1115.3 389.6L1117.0 395.8M1124.0 388.9L1125.5 395.1M1132.7 388.2L1134.0 394.5M1141.3 387.5L1142.5 393.9M1150.0 386.8L1151.0 393.2M1158.7 386.0L1159.5 392.6M1167.3 385.3L1168.0 392.0M1176.0 384.6L1176.5 391.4M1184.7 383.9L1185.0 390.8M1193.3 383.2L1193.5 390.1" stroke="#126c33" stroke-width="0.6" fill="none"/>
<polygon points="1224.4,381.0 1254.0,378.5 1254.0,384.5 1224.4,388.5" fill="#00c844" stroke="#126c33" stroke-width="0.6"/>
<path d="M1231.8 380.4L1231.8 387.5M1239.2 379.8L1239.2 386.5M1246.6 379.1L1246.6 385.5" stroke="#126c33" stroke-width="0.6" fill="none"/>
<polygon points="1225.0,369.5 1254.0,366.0 1254.0,370.0 1225.0,373.5" fill="#00f252" stroke="#003c16" stroke-width="1.0"/>
<polygon points="1225.0,374.5 1254.0,371.5 1254.0,377.5 1225.0,380.0" fill="#00f252" stroke="#003c16" stroke-width="1.0"/>
<polygon points="1241.0,357.0 1254.0,357.0 1254.0,365.0 1241.0,366.0" fill="#00f252" stroke="#003c16" stroke-width="1.0"/>
<polygon points="1232.0,373.0 1238.0,373.0 1238.0,379.0 1232.0,379.0" fill="#ff0000"/>
<polygon points="977.0,212.0 1016.0,212.0 1016.0,216.3 1064.0,224.0 1065.0,387.0 977.8,377.4" fill="#cc0000" stroke="#700000" stroke-width="0.6"/>
<path d="M987.9 214.0Q981.6 258 988.3 300Q981.6 342 988.7 378.6M998.8 214.0Q994.4 258 999.2 300Q994.4 342 999.6 379.8M1009.6 214.0Q1006.9 258 1010.1 300Q1006.9 342 1010.5 381.0M1020.5 217.0Q1019.0 258 1020.9 300Q1019.0 342 1021.4 382.2M1031.4 218.8Q1030.8 258 1031.8 300Q1030.8 342 1032.3 383.4M1042.2 220.5Q1042.3 258 1042.7 300Q1042.3 342 1043.2 384.6M1053.1 222.3Q1053.5 258 1053.6 300Q1053.5 342 1054.1 385.8M977.5 233.6Q995 226.5 1021 229.5L1064.5 233.6M977.5 240.7Q995 236.0 1021 239.1L1064.5 243.2M977.5 247.9Q995 245.5 1021 248.6L1064.5 252.8M977.5 255.0Q995 255.0 1021 258.2L1064.5 262.4M977.5 262.1Q995 264.5 1021 267.7L1064.5 271.9M977.5 269.2Q995 274.0 1021 277.2L1064.5 281.5M977.5 276.3Q995 283.5 1021 286.8L1064.5 291.1M977.5 283.5Q995 293.0 1021 296.3L1064.5 300.7M977.5 311.6Q995 302.5 1021 305.9L1064.5 310.3M977.5 318.7Q995 312.0 1021 315.4L1064.5 319.9M977.5 325.8Q995 321.5 1021 325.0L1064.5 329.5M977.5 332.9Q995 331.0 1021 334.5L1064.5 339.1M977.5 340.1Q995 340.5 1021 344.0L1064.5 348.6M977.5 347.2Q995 350.0 1021 353.6L1064.5 358.2M977.5 354.3Q995 359.5 1021 363.1L1064.5 367.8M977.5 361.4Q995 369.0 1021 372.7L1064.5 377.4" stroke="#700000" stroke-width="0.9" fill="none"/>
<polygon points="967.7,226.0 975.1,224.0 977.0,297.0 969.0,297.0" fill="#00c844" stroke="#126c33" stroke-width="0.6"/>
<polygon points="969.7,308.0 977.8,308.0 977.8,377.0 971.5,374.7" fill="#00c844" stroke="#126c33" stroke-width="0.6"/>
<path d="M971.0 226.0L973.0 297.0" stroke="#126c33" stroke-width="0.5" fill="none"/>
<path d="M973.5 308.0L974.5 376.0" stroke="#126c33" stroke-width="0.5" fill="none"/>
<path d="M968.5 240.0L977.5 241.0" stroke="#126c33" stroke-width="0.5" fill="none"/>
<path d="M968.5 255.0L977.5 256.0" stroke="#126c33" stroke-width="0.5" fill="none"/>
<path d="M968.5 270.0L977.5 271.0" stroke="#126c33" stroke-width="0.5" fill="none"/>
<path d="M968.5 285.0L977.5 286.0" stroke="#126c33" stroke-width="0.5" fill="none"/>
<path d="M968.5 320.0L977.5 321.0" stroke="#126c33" stroke-width="0.5" fill="none"/>
<path d="M968.5 335.0L977.5 336.0" stroke="#126c33" stroke-width="0.5" fill="none"/>
<path d="M968.5 350.0L977.5 351.0" stroke="#126c33" stroke-width="0.5" fill="none"/>
<path d="M968.5 365.0L977.5 366.0" stroke="#126c33" stroke-width="0.5" fill="none"/>
<polygon points="965.7,317.0 969.7,317.0 969.7,360.0 966.5,360.0" fill="#d00000"/>
<polygon points="963.5,262.0 966.5,262.0 968.0,296.0 965.0,296.0" fill="#d00000"/>
<polygon points="886.0,247.0 927.4,234.7 931.0,237.0 931.0,250.0 925.0,252.0" fill="#00f252" stroke="#003c16" stroke-width="1.0"/>
<polygon points="945.0,237.0 967.0,231.0 967.0,238.0 945.0,244.0" fill="#00f252" stroke="#003c16" stroke-width="1.0"/>
<polygon points="952.0,246.0 967.0,243.0 967.0,249.0 952.0,251.0" fill="#00f252" stroke="#003c16" stroke-width="1.0"/>
<polygon points="953.0,253.0 967.0,251.0 967.0,258.5 953.0,258.5" fill="#00f252" stroke="#003c16" stroke-width="1.0"/>
<polygon points="954.0,259.5 965.0,260.5 965.0,263.0 954.0,262.0" fill="#00f252" stroke="#003c16" stroke-width="1.0"/>
<polygon points="928.0,253.0 933.0,253.0 933.0,260.0 929.0,260.0" fill="#00f252" stroke="#003c16" stroke-width="1.0"/>
<polygon points="916.5,251.5 923.2,251.5 925.5,300.0 919.0,300.0" fill="#ff0000" stroke="#5a0000" stroke-width="0.6"/>
<polygon points="924.6,254.5 929.3,254.5 931.0,300.0 926.0,300.0" fill="#ff0000" stroke="#5a0000" stroke-width="0.6"/>
<polygon points="931.6,223.4 937.6,223.4 943.6,400.0 937.2,400.0" fill="#ff0000" stroke="#5a0000" stroke-width="0.6"/>
<polygon points="939.4,232.0 944.8,232.0 946.8,300.0 941.0,300.0" fill="#ff0000" stroke="#5a0000" stroke-width="0.6"/>
<polygon points="945.5,246.0 952.9,246.0 954.5,300.0 947.0,300.0" fill="#ff0000" stroke="#5a0000" stroke-width="0.6"/>
<polygon points="919.2,312.0 925.9,312.0 928.0,364.0 920.7,364.0" fill="#ff0000" stroke="#5a0000" stroke-width="0.6"/>
<polygon points="926.6,312.0 931.3,312.0 933.3,364.0 928.6,364.0" fill="#ff0000" stroke="#5a0000" stroke-width="0.6"/>
<polygon points="941.4,310.0 947.5,310.0 948.2,400.0 943.6,400.0" fill="#ff0000" stroke="#5a0000" stroke-width="0.6"/>
<polygon points="948.2,310.0 954.9,310.0 956.2,366.6 949.5,366.6" fill="#ff0000" stroke="#5a0000" stroke-width="0.6"/>
<polygon points="922.6,385.0 933.3,385.0 933.5,422.3 923.5,422.3" fill="#ff0000" stroke="#5a0000" stroke-width="0.9"/>
<path d="M922.8 394.3L933.3 394.3" stroke="#5a0000" stroke-width="1.5" fill="none"/>
<path d="M923.0 403.6L933.4 403.6" stroke="#5a0000" stroke-width="1.5" fill="none"/>
<path d="M923.3 413.0L933.5 413.0" stroke="#5a0000" stroke-width="1.5" fill="none"/>
<path d="M929.5 385.0L930.0 422.0" stroke="#5a0000" stroke-width="0.8" fill="none"/>
<polygon points="933.3,380.0 937.4,380.0 938.0,425.0 934.0,424.0" fill="#00c844" stroke="#126c33" stroke-width="0.6"/>
<polygon points="937.4,380.0 948.2,380.0 949.5,446.6 939.5,446.6" fill="#ff0000" stroke="#5a0000" stroke-width="0.9"/>
<path d="M937.7 390.7L948.4 390.7" stroke="#5a0000" stroke-width="1.5" fill="none"/>
<path d="M938.1 402.0L948.6 402.0" stroke="#5a0000" stroke-width="1.5" fill="none"/>
<path d="M938.5 413.3L948.9 413.3" stroke="#5a0000" stroke-width="1.5" fill="none"/>
<path d="M938.8 424.0L949.1 424.0" stroke="#5a0000" stroke-width="1.5" fill="none"/>
<path d="M939.1 435.3L949.3 435.3" stroke="#5a0000" stroke-width="1.5" fill="none"/>
<path d="M944.5 380.0L946.0 446.6" stroke="#5a0000" stroke-width="0.8" fill="none"/>
<polygon points="891.6,368.6 935.5,366.3 936.5,374.0 933.3,374.7" fill="#00f252" stroke="#003c16" stroke-width="1.0"/>
<path d="M900.0 369.5L934.0 367.8" stroke="#003c16" stroke-width="0.7" fill="none"/>
<polygon points="891.6,368.6 933.3,374.7 933.3,384.1 891.6,378.0" fill="#00f252" stroke="#003c16" stroke-width="1.1"/>
<polygon points="933.3,374.7 936.7,374.0 936.7,383.5 933.3,384.1" fill="#00f252" stroke="#003c16" stroke-width="1.0"/>
<polygon points="956.0,362.5 970.0,361.5 971.5,374.7 948.0,373.3 949.0,368.0" fill="#00c844" stroke="#126c33" stroke-width="0.6"/>
<polygon points="947.8,373.9 1066.0,389.6 1066.7,486.6 949.5,446.6" fill="#00c844" stroke="#126c33" stroke-width="0.75"/>
<path d="M954.8 374.8L956.4 449.0M961.7 375.7L963.3 451.3M968.7 376.7L970.2 453.7M975.6 377.6L977.1 456.0M982.6 378.5L984.0 458.4M989.5 379.4L990.9 460.7M996.5 380.4L997.8 463.1M1003.4 381.3L1004.7 465.4M1010.4 382.2L1011.5 467.8M1017.3 383.1L1018.4 470.1M1024.3 384.1L1025.3 472.5M1031.2 385.0L1032.2 474.8M1038.2 385.9L1039.1 477.2M1045.1 386.8L1046.0 479.5M1052.1 387.8L1052.9 481.9M1059.0 388.7L1059.8 484.2M948.0 383.0L1066.1 401.7M948.2 392.1L1066.2 413.9M948.4 401.2L1066.3 426.0M948.6 410.2L1066.3 438.1M948.9 419.3L1066.4 450.2M949.1 428.4L1066.5 462.4M949.3 437.5L1066.6 474.5" stroke="#126c33" stroke-width="0.75" fill="none"/>
<path d="M982.5 378.5L984.0 458.3" stroke="#0a4a20" stroke-width="1.0" fill="none"/>
<polygon points="888.2,312.9 929.3,310.9 933.0,312.5 900.0,315.5" fill="#00f252" stroke="#003c16" stroke-width="1.0"/>
<polygon points="888.2,303.5 929.3,299.4 929.3,310.9 888.2,312.9" fill="#00f252" stroke="#003c16" stroke-width="1.1"/>
<polygon points="929.3,299.4 933.3,299.2 933.3,310.6 929.3,310.9" fill="#00f252" stroke="#003c16" stroke-width="1.0"/>
<polygon points="940.8,299.4 973.1,296.0 973.1,308.2 940.8,310.9" fill="#00f252" stroke="#003c16" stroke-width="1.1"/>
<polygon points="973.1,296.0 976.5,295.6 976.5,308.6 973.1,308.2" fill="#00f252" stroke="#003c16" stroke-width="1.0"/>
<polygon points="976.5,295.6 1061.4,287.3 1061.4,304.5 976.5,308.6" fill="#00f252" stroke="#003c16" stroke-width="1.1"/>
<polygon points="1061.4,287.3 1064.0,287.0 1064.0,304.3 1061.4,304.5" fill="#00f252" stroke="#003c16" stroke-width="1.0"/>
<polygon points="945.0,311.5 969.0,309.5 969.0,314.0 950.0,315.0" fill="#00c844" stroke="#126c33" stroke-width="0.6"/>
<polygon points="885.7,236.8 927.4,224.0 927.4,234.7 885.7,247.2" fill="#00f252" stroke="#003c16" stroke-width="1.1"/>
<polygon points="927.4,224.0 931.0,223.2 931.0,236.5 927.4,234.7" fill="#00f252" stroke="#003c16" stroke-width="1.0"/>
<polygon points="937.8,232.9 970.6,223.4 968.0,227.0 945.0,234.5" fill="#00f252" stroke="#003c16" stroke-width="1.0"/>
<polygon points="937.8,221.0 970.6,211.5 970.6,223.4 937.8,232.9" fill="#00f252" stroke="#003c16" stroke-width="1.1"/>
<polygon points="970.6,211.5 974.4,210.6 974.4,223.0 970.6,223.4" fill="#00f252" stroke="#003c16" stroke-width="1.0"/>
<polygon points="974.4,223.5 1059.4,200.5 1062.0,202.5 980.0,225.5" fill="#00f252" stroke="#003c16" stroke-width="1.0"/>
<polygon points="974.4,210.6 1059.4,182.3 1059.4,200.5 974.4,223.5" fill="#00f252" stroke="#003c16" stroke-width="1.1"/>
<polygon points="1059.4,182.3 1062.0,181.6 1062.0,202.5 1059.4,200.5" fill="#00f252" stroke="#003c16" stroke-width="1.0"/>
<polygon points="1093.0,405.0 1202.5,392.0 1202.5,464.5 1093.7,490.0" fill="#00c844" stroke="#126c33" stroke-width="0.75"/>
<path d="M1105.2 403.6L1105.8 487.2M1117.3 402.1L1117.9 484.3M1129.5 400.7L1130.0 481.5M1141.7 399.2L1142.1 478.7M1153.8 397.8L1154.1 475.8M1166.0 396.3L1166.2 473.0M1178.2 394.9L1178.3 470.2M1190.3 393.4L1190.4 467.3M1093.1 419.2L1202.5 404.1M1093.2 433.3L1202.5 416.2M1093.3 447.5L1202.5 428.2M1093.5 461.7L1202.5 440.3M1093.6 475.8L1202.5 452.4" stroke="#126c33" stroke-width="0.75" fill="none"/>
<polygon points="1223.0,395.0 1253.5,392.0 1253.5,466.0 1223.0,463.5" fill="#00c844" stroke="#126c33" stroke-width="0.7"/>
<path d="M1233.2 394.0L1233.2 464.3M1243.3 393.0L1243.3 465.2M1223.0 408.7L1253.5 406.8M1223.0 422.4L1253.5 421.6M1223.0 436.1L1253.5 436.4M1223.0 449.8L1253.5 451.2" stroke="#126c33" stroke-width="0.7" fill="none"/>
<polygon points="1204.5,400.0 1222.9,400.0 1222.9,460.6 1204.5,463.0" fill="#ff0000" stroke="#5a0000" stroke-width="0.9"/>
<path d="M1204.5 417.6L1222.9 417.0" stroke="#5a0000" stroke-width="1.5" fill="none"/>
<path d="M1204.5 432.8L1222.9 431.5" stroke="#5a0000" stroke-width="1.5" fill="none"/>
<path d="M1204.5 447.9L1222.9 446.1" stroke="#5a0000" stroke-width="1.5" fill="none"/>
<polygon points="1202.1,400.0 1204.5,400.0 1204.5,463.0 1202.1,462.0" fill="#ff0000" stroke="#5a0000" stroke-width="0.6"/>
<polygon points="1253.6,395.0 1276.6,395.0 1276.6,470.7 1253.6,466.0" fill="#ff0000" stroke="#5a0000" stroke-width="0.9"/>
<polygon points="1276.6,395.0 1280.8,397.0 1280.8,468.7 1276.6,470.7" fill="#ff0000" stroke="#5a0000" stroke-width="0.7"/>
<path d="M1253.6 404.2L1276.6 404.8L1280.8 406.3" stroke="#5a0000" stroke-width="1.5" fill="none"/>
<path d="M1253.6 421.3L1276.6 423.0L1280.8 423.5" stroke="#5a0000" stroke-width="1.5" fill="none"/>
<path d="M1253.6 438.3L1276.6 441.2L1280.8 440.7" stroke="#5a0000" stroke-width="1.5" fill="none"/>
<path d="M1253.6 455.4L1276.6 459.3L1280.8 457.9" stroke="#5a0000" stroke-width="1.5" fill="none"/>
<polygon points="1085.0,392.8 1100.0,390.0 1145.0,396.8 1260.0,384.0 1281.3,381.8 1281.3,385.0 1152.4,398.9 1139.5,398.9" fill="#00f252" stroke="#003c16" stroke-width="1.0"/>
<polygon points="1139.5,398.9 1152.4,398.9 1152.4,417.1 1139.5,417.1" fill="#00f252" stroke="#003c16" stroke-width="1.0"/>
<path d="M1145.5 403.0L1146.0 417.0" stroke="#003c16" stroke-width="1" fill="none"/>
<polygon points="1152.4,398.9 1281.3,385.0 1281.3,398.5 1152.4,417.1" fill="#00f252" stroke="#003c16" stroke-width="1.1"/>
<polygon points="1255.4,208.6 1279.0,213.3 1278.3,382.8 1254.7,381.4" fill="#ff0000" stroke="#5a0000" stroke-width="0.9"/>
<polygon points="1279.0,213.3 1283.4,212.7 1282.0,380.0 1278.3,382.8" fill="#ff0000" stroke="#5a0000" stroke-width="0.7"/>
<polygon points="1081.6,302.8 1136.8,300.0 1152.3,300.0 1205.0,303.5 1205.0,307.0 1100.0,305.5" fill="#00f252" stroke="#003c16" stroke-width="1.0"/>
<polygon points="1094.0,307.5 1150.0,306.0 1150.0,311.0 1096.0,311.0" fill="#00f252" stroke="#003c16" stroke-width="1.0"/>
<polygon points="1153.0,304.5 1200.0,306.0 1200.0,309.5 1153.0,308.5" fill="#00f252" stroke="#003c16" stroke-width="1.0"/>
<polygon points="1212.0,303.5 1253.0,306.5 1253.0,310.0 1225.0,309.0" fill="#00f252" stroke="#003c16" stroke-width="1.0"/>
<polygon points="1225.0,311.0 1232.0,311.0 1232.0,314.5 1225.0,314.5" fill="#00f252" stroke="#003c16" stroke-width="1.0"/>
<polygon points="1241.0,311.0 1254.0,310.5 1254.0,315.5 1241.0,315.0" fill="#00f252" stroke="#003c16" stroke-width="1.0"/>
<polygon points="1136.8,281.2 1152.3,280.5 1152.3,300.0 1136.8,300.0" fill="#00f252" stroke="#003c16" stroke-width="1.0"/>
<path d="M1144.0 287.0L1144.5 300.0" stroke="#003c16" stroke-width="1" fill="none"/>
<polygon points="1152.3,280.5 1282.3,291.3 1282.3,306.8 1152.3,300.0" fill="#00f252" stroke="#003c16" stroke-width="1.1"/>
<polygon points="1283.0,294.7 1325.5,298.0 1325.5,309.5 1283.0,306.8" fill="#00f252" stroke="#003c16" stroke-width="1.1"/>
<polygon points="1080.2,193.8 1135.5,178.3 1143.0,179.5 1090.0,196.0" fill="#00f252" stroke="#003c16" stroke-width="1.0"/>
<polygon points="1150.5,177.9 1283.4,212.7 1279.0,213.5 1143.0,180.0" fill="#00f252" stroke="#003c16" stroke-width="1.0"/>
<polygon points="1135.5,158.4 1143.0,160.5 1150.5,157.7 1150.5,177.9 1143.0,179.5 1135.5,178.3" fill="#00f252" stroke="#003c16" stroke-width="1.0"/>
<path d="M1143.5 166.0L1143.7 179.0" stroke="#003c16" stroke-width="1" fill="none"/>
<polygon points="1150.5,157.7 1283.4,197.2 1283.4,212.7 1150.5,177.9" fill="#00f252" stroke="#003c16" stroke-width="1.1"/>
<polygon points="1283.4,219.4 1327.5,229.5 1325.0,231.0 1283.4,221.5" fill="#00f252" stroke="#003c16" stroke-width="1.0"/>
<polygon points="1283.4,205.0 1327.5,217.4 1327.5,229.5 1283.4,219.4" fill="#00f252" stroke="#003c16" stroke-width="1.1"/>
<polygon points="1082.2,177.6 1089.6,195.0 1092.3,340.0 1093.7,491.3 1086.9,493.3 1085.0,340.0" fill="#ff0000" stroke="#5a0000" stroke-width="0.7"/>
<polygon points="1062.0,183.0 1080.0,177.6 1082.2,177.6 1085.0,340.0 1086.9,493.3 1066.7,486.6 1064.7,340.0" fill="#ff0000" stroke="#5a0000" stroke-width="0.7"/>
<path d="M1066.0 405.0L1086.5 408.0L1093.4 406.5" stroke="#5a0000" stroke-width="1.5" fill="none"/>
<path d="M1066.0 422.0L1086.5 425.0L1093.4 423.5" stroke="#5a0000" stroke-width="1.5" fill="none"/>
<path d="M1066.0 439.0L1086.5 442.0L1093.4 440.5" stroke="#5a0000" stroke-width="1.5" fill="none"/>
<path d="M1066.0 456.0L1086.5 459.0L1093.4 457.5" stroke="#5a0000" stroke-width="1.5" fill="none"/>
<path d="M1066.0 473.0L1086.5 476.0L1093.4 474.5" stroke="#5a0000" stroke-width="1.5" fill="none"/>
<polygon points="1080.2,193.8 1135.5,178.3 1143.0,179.5 1090.0,196.0" fill="#00f252" stroke="#003c16" stroke-width="1.0"/>
<polygon points="1080.2,176.3 1135.5,158.4 1135.5,178.3 1080.2,193.8" fill="#00f252" stroke="#003c16" stroke-width="1.1"/>
<polygon points="1081.6,286.6 1136.8,281.2 1136.8,300.0 1081.6,302.8" fill="#00f252" stroke="#003c16" stroke-width="1.1"/>
<polygon points="1085.0,392.8 1139.5,398.9 1139.5,417.1 1085.0,409.0" fill="#00f252" stroke="#003c16" stroke-width="1.1"/>
<circle cx="1077.3" cy="341.7" r="9.7" fill="#00ffff"/>
<path d="M922.0 422.0h6l-3 5zM922.5 424.5h5v3.5h-5zM927.5 423.8h6l-3 5zM928.0 426.2h5v3.5h-5zM933.0 425.5h6l-3 5zM933.5 428.0h5v3.5h-5zM938.0 446.5h6l-3 5zM938.5 449.0h5v3.5h-5zM942.6 448.1h6l-3 5zM943.1 450.6h5v3.5h-5zM947.3 449.7h6l-3 5zM947.8 452.2h5v3.5h-5zM951.9 451.3h6l-3 5zM952.4 453.8h5v3.5h-5zM956.5 452.9h6l-3 5zM957.0 455.4h5v3.5h-5zM961.1 454.5h6l-3 5zM961.6 457.0h5v3.5h-5zM965.8 456.1h6l-3 5zM966.3 458.6h5v3.5h-5zM970.4 457.6h6l-3 5zM970.9 460.1h5v3.5h-5zM975.0 459.2h6l-3 5zM975.5 461.7h5v3.5h-5zM979.7 460.8h6l-3 5zM980.2 463.3h5v3.5h-5zM984.3 462.4h6l-3 5zM984.8 464.9h5v3.5h-5zM988.9 464.0h6l-3 5zM989.4 466.5h5v3.5h-5zM993.6 465.6h6l-3 5zM994.1 468.1h5v3.5h-5zM998.2 467.2h6l-3 5zM998.7 469.7h5v3.5h-5zM1002.8 468.8h6l-3 5zM1003.3 471.3h5v3.5h-5zM1007.4 470.4h6l-3 5zM1007.9 472.9h5v3.5h-5zM1012.1 472.0h6l-3 5zM1012.6 474.5h5v3.5h-5zM1016.7 473.6h6l-3 5zM1017.2 476.1h5v3.5h-5zM1021.3 475.2h6l-3 5zM1021.8 477.7h5v3.5h-5zM1026.0 476.8h6l-3 5zM1026.5 479.3h5v3.5h-5zM1030.6 478.4h6l-3 5zM1031.1 480.9h5v3.5h-5zM1035.2 479.9h6l-3 5zM1035.7 482.4h5v3.5h-5zM1039.9 481.5h6l-3 5zM1040.4 484.0h5v3.5h-5zM1044.5 483.1h6l-3 5zM1045.0 485.6h5v3.5h-5zM1049.1 484.7h6l-3 5zM1049.6 487.2h5v3.5h-5zM1053.7 486.3h6l-3 5zM1054.2 488.8h5v3.5h-5zM1058.4 487.9h6l-3 5zM1058.9 490.4h5v3.5h-5zM1063.0 489.5h6l-3 5zM1063.5 492.0h5v3.5h-5zM1069.0 493.5h6l-3 5zM1069.5 496.0h5v3.5h-5zM1074.0 493.5h6l-3 5zM1074.5 496.0h5v3.5h-5zM1079.0 493.5h6l-3 5zM1079.5 496.0h5v3.5h-5zM1084.0 493.5h6l-3 5zM1084.5 496.0h5v3.5h-5zM1089.0 493.5h6l-3 5zM1089.5 496.0h5v3.5h-5zM1095.0 490.5h6l-3 5zM1095.5 493.0h5v3.5h-5zM1099.6 489.4h6l-3 5zM1100.1 491.9h5v3.5h-5zM1104.3 488.3h6l-3 5zM1104.8 490.8h5v3.5h-5zM1108.9 487.2h6l-3 5zM1109.4 489.7h5v3.5h-5zM1113.5 486.1h6l-3 5zM1114.0 488.6h5v3.5h-5zM1118.2 485.0h6l-3 5zM1118.7 487.5h5v3.5h-5zM1122.8 484.0h6l-3 5zM1123.3 486.5h5v3.5h-5zM1127.5 482.9h6l-3 5zM1128.0 485.4h5v3.5h-5zM1132.1 481.8h6l-3 5zM1132.6 484.3h5v3.5h-5zM1136.7 480.7h6l-3 5zM1137.2 483.2h5v3.5h-5zM1141.4 479.6h6l-3 5zM1141.9 482.1h5v3.5h-5zM1146.0 478.5h6l-3 5zM1146.5 481.0h5v3.5h-5zM1150.6 477.4h6l-3 5zM1151.1 479.9h5v3.5h-5zM1155.3 476.3h6l-3 5zM1155.8 478.8h5v3.5h-5zM1159.9 475.2h6l-3 5zM1160.4 477.7h5v3.5h-5zM1164.5 474.1h6l-3 5zM1165.0 476.6h5v3.5h-5zM1169.2 473.0h6l-3 5zM1169.7 475.5h5v3.5h-5zM1173.8 472.0h6l-3 5zM1174.3 474.5h5v3.5h-5zM1178.5 470.9h6l-3 5zM1179.0 473.4h5v3.5h-5zM1183.1 469.8h6l-3 5zM1183.6 472.3h5v3.5h-5zM1187.7 468.7h6l-3 5zM1188.2 471.2h5v3.5h-5zM1192.4 467.6h6l-3 5zM1192.9 470.1h5v3.5h-5zM1197.0 466.5h6l-3 5zM1197.5 469.0h5v3.5h-5zM1223.0 464.5h6l-3 5zM1223.5 467.0h5v3.5h-5zM1228.2 465.1h6l-3 5zM1228.7 467.6h5v3.5h-5zM1233.4 465.7h6l-3 5zM1233.9 468.2h5v3.5h-5zM1238.6 466.3h6l-3 5zM1239.1 468.8h5v3.5h-5zM1243.8 466.9h6l-3 5zM1244.3 469.4h5v3.5h-5zM1249.0 467.5h6l-3 5zM1249.5 470.0h5v3.5h-5zM1255.0 470.5h6l-3 5zM1255.5 473.0h5v3.5h-5zM1260.5 470.8h6l-3 5zM1261.0 473.2h5v3.5h-5zM1266.0 471.0h6l-3 5zM1266.5 473.5h5v3.5h-5zM1271.5 471.2h6l-3 5zM1272.0 473.8h5v3.5h-5zM1277.0 471.5h6l-3 5zM1277.5 474.0h5v3.5h-5zM1283.0 461.5h6l-3 5zM1283.5 464.0h5v3.5h-5zM1287.6 460.2h6l-3 5zM1288.1 462.7h5v3.5h-5zM1292.1 458.9h6l-3 5zM1292.6 461.4h5v3.5h-5zM1296.7 457.6h6l-3 5zM1297.2 460.1h5v3.5h-5zM1301.3 456.4h6l-3 5zM1301.8 458.9h5v3.5h-5zM1305.9 455.1h6l-3 5zM1306.4 457.6h5v3.5h-5zM1310.4 453.8h6l-3 5zM1310.9 456.3h5v3.5h-5zM1315.0 452.5h6l-3 5zM1315.5 455.0h5v3.5h-5zM1320.0 449.5h6l-3 5zM1320.5 452.0h5v3.5h-5zM1324.9 448.5h6l-3 5zM1325.4 451.0h5v3.5h-5zM1329.8 447.5h6l-3 5zM1330.3 450.0h5v3.5h-5zM1334.7 446.5h6l-3 5zM1335.2 449.0h5v3.5h-5zM1339.6 445.5h6l-3 5zM1340.1 448.0h5v3.5h-5zM1344.5 444.5h6l-3 5zM1345.0 447.0h5v3.5h-5zM1349.4 443.5h6l-3 5zM1349.9 446.0h5v3.5h-5zM1354.3 442.5h6l-3 5zM1354.8 445.0h5v3.5h-5zM1359.2 441.5h6l-3 5zM1359.7 444.0h5v3.5h-5zM1364.1 440.5h6l-3 5zM1364.6 443.0h5v3.5h-5zM1369.0 439.5h6l-3 5zM1369.5 442.0h5v3.5h-5zM1374.0 435.5h6l-3 5zM1374.5 438.0h5v3.5h-5zM1378.7 434.6h6l-3 5zM1379.2 437.1h5v3.5h-5zM1383.4 433.8h6l-3 5zM1383.9 436.3h5v3.5h-5zM1388.1 432.9h6l-3 5zM1388.6 435.4h5v3.5h-5zM1392.9 432.1h6l-3 5zM1393.4 434.6h5v3.5h-5zM1397.6 431.2h6l-3 5zM1398.1 433.7h5v3.5h-5zM1402.3 430.4h6l-3 5zM1402.8 432.9h5v3.5h-5zM1407.0 429.5h6l-3 5zM1407.5 432.0h5v3.5h-5z" stroke="#1f6a25" stroke-width="0.8" fill="none"/>
<path d="M785.4 302.6L888.0 304.2" stroke="#4a4a4a" stroke-width="0.9" fill="none"/>
<path d="M814.2 298.8L900.0 301.5" stroke="#4a4a4a" stroke-width="0.9" fill="none"/>
<path d="M841.0 295.2L930.0 298.5" stroke="#4a4a4a" stroke-width="0.9" fill="none"/>
<path d="M864.4 291.8L965.0 296.0" stroke="#4a4a4a" stroke-width="0.9" fill="none"/>
<path d="M875.8 290.8L967.0 294.5" stroke="#4a4a4a" stroke-width="0.9" fill="none"/>
<path d="M892.6 287.8L968.0 291.5" stroke="#4a4a4a" stroke-width="0.9" fill="none"/>
<path d="M843.7 306.8L888.0 303.6" stroke="#4a4a4a" stroke-width="0.9" fill="none"/>
<path d="M784.4 302.6L795.4 302.9" stroke="#b01000" stroke-width="1.0" fill="none"/>
<path d="M813.2 298.8L824.2 299.1" stroke="#b01000" stroke-width="1.0" fill="none"/>
<path d="M840.0 295.2L851.0 295.5" stroke="#b01000" stroke-width="1.0" fill="none"/>
<path d="M863.4 291.8L874.4 292.1" stroke="#b01000" stroke-width="1.0" fill="none"/>
<path d="M874.8 290.8L885.8 291.1" stroke="#b01000" stroke-width="1.0" fill="none"/>
<path d="M891.6 287.8L902.6 288.1" stroke="#b01000" stroke-width="1.0" fill="none"/>
<path d="M842.7 306.8L853.7 307.1" stroke="#b01000" stroke-width="1.0" fill="none"/>
<path d="M923.0 287.0L1070.0 283.5" stroke="#808080" stroke-width="0.8" fill="none" opacity="0.6"/>
<path d="M967.0 277.4L1070.0 284.0" stroke="#808080" stroke-width="0.8" fill="none" opacity="0.6"/>
<path d="M1022.0 269.8L1154.0 277.8" stroke="#808080" stroke-width="0.8" fill="none" opacity="0.6"/>
<path d="M1154.0 277.8L1235.0 271.8" stroke="#808080" stroke-width="0.8" fill="none" opacity="0.6"/>
<path d="M1062.0 276.5L1135.0 280.5" stroke="#808080" stroke-width="0.8" fill="none" opacity="0.6"/>
<path d="M1235.0 271.8L1290.0 277.0" stroke="#808080" stroke-width="0.8" fill="none" opacity="0.6"/>
<path d="M1283.0 289.0L1378.0 296.0" stroke="#808080" stroke-width="0.8" fill="none" opacity="0.6"/>
<path d="M1283.0 292.0L1378.0 298.0" stroke="#808080" stroke-width="0.8" fill="none" opacity="0.6"/>
<path d="M1376.6 296.5L1429.0 293.1" stroke="#3c3c3c" stroke-width="0.9" fill="none"/>
<path d="M1376.6 297.5L1441.0 294.5" stroke="#3c3c3c" stroke-width="0.9" fill="none"/>
<path d="M1376.6 298.5L1458.8 296.9" stroke="#3c3c3c" stroke-width="0.9" fill="none"/>
<path d="M1376.6 301.2L1493.0 301.2" stroke="#3c3c3c" stroke-width="0.9" fill="none"/>
<path d="M1414.0 303.2L1493.0 305.2" stroke="#3c3c3c" stroke-width="0.9" fill="none"/>
<path d="M1418.0 293.1L1429.0 293.5" stroke="#c03000" stroke-width="1.0" fill="none"/>
<path d="M1431.0 294.3L1441.0 294.7" stroke="#c03000" stroke-width="1.0" fill="none"/>
<path d="M1449.0 296.7L1459.0 297.1" stroke="#c03000" stroke-width="1.0" fill="none"/>
<path d="M1480.0 301.0L1493.0 301.4" stroke="#c03000" stroke-width="1.0" fill="none"/>
<path d="M1460.0 308.7L1465.5 309.1" stroke="#c03000" stroke-width="1.0" fill="none"/>
<path d="M1473.0 308.4L1479.0 308.8" stroke="#c03000" stroke-width="1.0" fill="none"/>
<path d="M1286.0 276.6L1302.0 277.0" stroke="#c03000" stroke-width="1.0" fill="none"/>
<path d="M1354.0 285.6L1367.0 286.0" stroke="#c03000" stroke-width="1.0" fill="none"/>
<path d="M1367.0 286.5L1379.0 286.9" stroke="#c03000" stroke-width="1.0" fill="none"/>
</svg>
<div id="dlg">
<div class="ttl">Visualization</div>
<svg class="cx" width="12" height="12" viewBox="0 0 12 12"><path d="M1 1L11 11M11 1L1 11" stroke="#5a5a5a" stroke-width="1" fill="none"/></svg>
<div class="lb">
<div class="it" style="top:2px;letter-spacing:-0.06px"><span>Analysis Model</span></div>
<div class="it" style="top:29px;letter-spacing:0.15px"><span>Deformation</span></div>
<div class="it" style="top:56px;letter-spacing:-0.37px"><span>Loads</span></div>
<div class="it" style="top:83px;letter-spacing:-0.35px"><span>Frame Results</span></div>
<div class="it" style="top:110px;letter-spacing:-0.16px"><span>Shearwall Results</span></div>
<div class="it" style="top:137px;letter-spacing:-0.1px"><span>Purlin Results</span></div>
<div class="it" style="top:164px;letter-spacing:0.05px"><span>Foundation Results</span></div>
<div class="it" style="top:191px;letter-spacing:-0.22px"><span>Shell Results</span></div>
<div class="it sel" style="top:218px;letter-spacing:-0.12px"><span>Concrete Design</span></div>
<div class="it" style="top:245px;letter-spacing:-0.16px"><span>Steel Design</span></div>
</div>
<div class="rp">
<div class="gb" style="top:16px;height:68px"></div>
<div class="gl" style="top:9px;width:99px"><span class="rd"></span><span class="lt" style="letter-spacing:-0.62px">Design input :</span></div>
<div class="cb dis" style="top:41px"><span style="letter-spacing:-0.75px;margin-left:-1px">Element sections</span><svg width="10" height="6" viewBox="0 0 10 6"><path d="M0.5 0.5L5 5L9.5 0.5" stroke="#b4b4b4" fill="none" stroke-width="1"/></svg></div>
<div class="gb" style="top:107px;height:68px"></div>
<div class="gl" style="top:100px;width:107px"><span class="rd on"></span><span class="lt" style="letter-spacing:-0.5px">Design output :</span></div>
<div class="cb" style="top:132px"><span style="letter-spacing:-0.58px;color:#000">All failures</span><svg width="10" height="6" viewBox="0 0 10 6"><path d="M0.5 0.5L5 5L9.5 0.5" stroke="#303030" fill="none" stroke-width="1.2"/></svg></div>
<div class="ck" style="top:187px"><svg width="13" height="13" viewBox="0 0 13 13"><rect x="0.5" y="0.5" width="12" height="12" fill="#fff" stroke="#333"/><path d="M2.5 6.5L5 9.5L10.5 3" stroke="#555" stroke-width="1.1" fill="none"/></svg><span style="letter-spacing:-0.78px">Show values</span></div>
<div class="ck" style="top:208px"><svg width="13" height="13" viewBox="0 0 13 13"><rect x="0.5" y="0.5" width="12" height="12" fill="#fff" stroke="#333"/><path d="M2.5 6.5L5 9.5L10.5 3" stroke="#555" stroke-width="1.1" fill="none"/></svg><span style="letter-spacing:-0.62px">Extrude elements</span></div>
</div>
</div>
</body></html>
